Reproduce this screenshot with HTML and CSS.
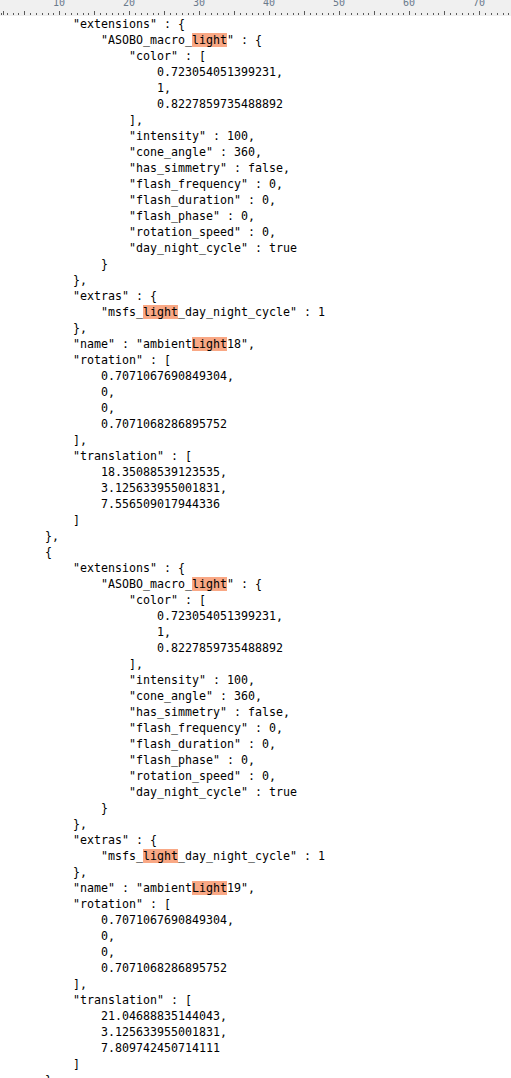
FILE: index.html
```html
<!DOCTYPE html>
<html>
<head>
<meta charset="utf-8">
<link rel="stylesheet" href="styles.css">
</head>
<body>
<div class="ruler">
  <div class="ruler-labels"><span>10</span><span>20</span><span>30</span><span>40</span><span>50</span><span>60</span><span>70</span></div>
</div>
<pre class="code">    "extensions" : {
        "ASOBO_macro_<span class="hl">light</span>" : {
            "color" : [
                0.723054051399231,
                1,
                0.8227859735488892
            ],
            "intensity" : 100,
            "cone_angle" : 360,
            "has_simmetry" : false,
            "flash_frequency" : 0,
            "flash_duration" : 0,
            "flash_phase" : 0,
            "rotation_speed" : 0,
            "day_night_cycle" : true
        }
    },
    "extras" : {
        "msfs_<span class="hl">light</span>_day_night_cycle" : 1
    },
    "name" : "ambient<span class="hl">Light</span>18",
    "rotation" : [
        0.7071067690849304,
        0,
        0,
        0.7071068286895752
    ],
    "translation" : [
        18.35088539123535,
        3.125633955001831,
        7.556509017944336
    ]
},
{
    "extensions" : {
        "ASOBO_macro_<span class="hl">light</span>" : {
            "color" : [
                0.723054051399231,
                1,
                0.8227859735488892
            ],
            "intensity" : 100,
            "cone_angle" : 360,
            "has_simmetry" : false,
            "flash_frequency" : 0,
            "flash_duration" : 0,
            "flash_phase" : 0,
            "rotation_speed" : 0,
            "day_night_cycle" : true
        }
    },
    "extras" : {
        "msfs_<span class="hl">light</span>_day_night_cycle" : 1
    },
    "name" : "ambient<span class="hl">Light</span>19",
    "rotation" : [
        0.7071067690849304,
        0,
        0,
        0.7071068286895752
    ],
    "translation" : [
        21.04688835144043,
        3.125633955001831,
        7.809742450714111
    ]
},
</pre>
</body>
</html>
```

FILE: styles.css
```css
html, body {
  margin: 0;
  padding: 0;
  background: #ffffff;
}

body {
  width: 511px;
  height: 1078px;
  overflow: hidden;
}

.ruler {
  height: 16px;
  background-color: #f0f0f0;
  background-image:
    repeating-linear-gradient(to right, #5a5a5a 0 1px, transparent 1px 35px),
    repeating-linear-gradient(to right, #5a5a5a 0 1px, transparent 1px 5.8333px);
  background-repeat: repeat-x, repeat-x;
  background-size: 100% 4px, 100% 2px;
  background-position: 24px 11px, 1px 13px;
  overflow: hidden;
}

.ruler-labels {
  display: flex;
  padding-left: 24px;
  margin-top: -2px;
  height: 9px;
  font-family: "DejaVu Sans Mono", monospace;
  font-size: 10px;
  line-height: 9px;
  color: #6a7a8c;
}

.ruler-labels span {
  width: 70px;
  flex: none;
  text-align: center;
}

.code {
  margin: 0;
  padding: 0 0 0 45px;
  font-family: "DejaVu Sans Mono", monospace;
  font-size: 11.63px;
  line-height: 16px;
  color: #000000;
  white-space: pre;
}

.hl {
  background: #f9a885;
}
```
